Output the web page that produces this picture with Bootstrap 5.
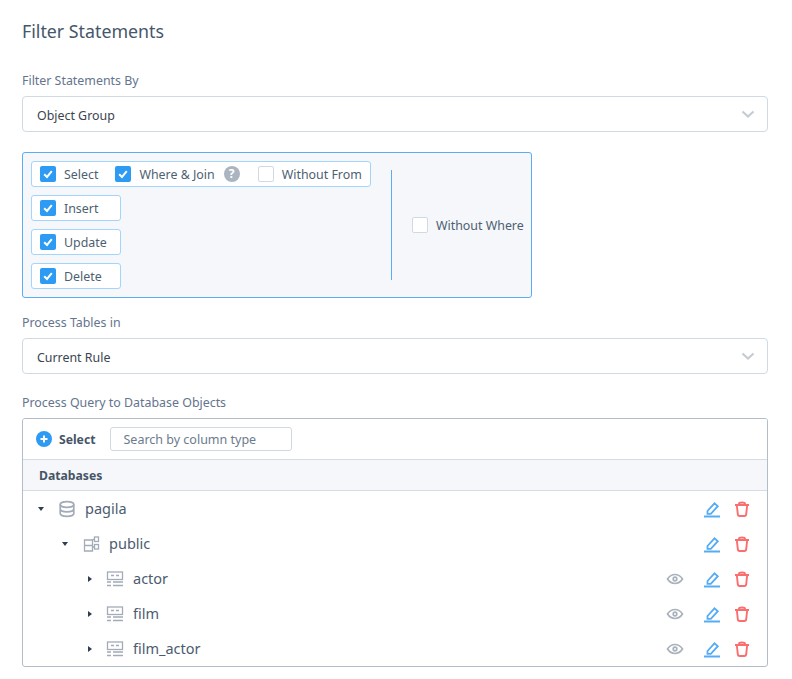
<!DOCTYPE html>
<html lang="en">
<head>
<meta charset="utf-8">
<title>Filter Statements</title>
<link href="https://cdn.jsdelivr.net/npm/bootstrap@5.3.0/dist/css/bootstrap.min.css" rel="stylesheet">
<style>
html,body{height:679px;overflow:hidden;background:#fff}
body{font-family:"Noto Sans","Liberation Sans",sans-serif;color:#465a70;font-size:12.4px;line-height:18px}
.pg{padding:0 24px 0 22px}
.ttl{font-size:17.8px;font-weight:400;line-height:26px;color:#45576b;margin:0;padding-top:18px;height:71px}
.lbl{font-size:12.4px;line-height:18px;height:17px;color:#64748e;margin:0;display:block}
.lbl.a{margin-bottom:8px;padding-top:1px}
.lbl.b{margin-bottom:7px}
.lbl.c{margin:20px 0 8px}
.sel{height:36px;border:1px solid #cfdae3;border-radius:4px;padding:0 12px 0 14px;color:#3b4450;font-size:12.4px;background:#fff}
.sel span{padding-top:3px}
.sel svg{width:14px;height:9px}
.opts{width:510px;height:146px;border:1px solid #5badf0;border-radius:3px;background:#f5f7fa;margin-top:20px;padding:8px;margin-bottom:16px}
.lft{width:340px;flex:none}
.chip{height:26px;background:#fff;border:1px solid #a3d5fc;border-radius:3px;padding:0 8px;gap:8px}
.chip.wd{width:90px}
.chk{width:16px;height:16px;border-radius:2px;background:#2d9bf3;flex:none}
.chk.off{background:#fff;border:1px solid #cfdae3}
.chk svg{display:block;width:16px;height:16px}
.txt{color:#4e5f73;font-size:12.4px;white-space:nowrap;padding-top:2px}
.g2{margin-left:9px}
.g3{margin-left:10px}
.qm{width:16px;height:16px;border-radius:50%;background:#abb5c1;color:#fff;font-size:12px;font-weight:700;line-height:16px;text-align:center;flex:none;margin-left:1px}
.dv{width:1px;height:110px;background:#5badf0;margin:0 20px;flex:none}
.pnl{height:249px;border:1px solid #b3bdc7;border-radius:3px;margin-top:-1px;overflow:hidden}
.tb{height:41px;border-bottom:1px solid #d5dce3;padding:0 13px;background:#fff}
.pl{width:16px;height:16px;display:block;flex:none}
.sb{font-weight:700;font-size:12.2px;color:#465566;margin:0 15px 0 7px;padding-top:2px}
.srch{width:182px;height:24px;border:1px solid #cfd9e2;border-radius:3px;padding:0 12px;color:#6b7b8e;font-size:12.5px;line-height:24px}
.hd{height:31px;background:#f5f7fa;border-bottom:1px solid #d5dce3;padding:2px 16px 0;font-weight:700;font-size:12.2px;color:#465566}
.rw{height:35px;padding-right:16px;font-size:14.5px;color:#4c5c6f}
.rw span{padding-bottom:2px}
.l0{padding-left:13px}.l1{padding-left:37px}.l2{padding-left:62px}
.ar{width:10px;height:10px;display:block;flex:none;margin-right:12px}
.l2 .ar{margin-right:11px}
.ic{width:18px;height:18px;display:block;flex:none;margin-right:9px}
.act{width:18px;height:18px;display:block;flex:none}
.eye{margin-right:19px}
.ed{margin-right:12px}
</style>
</head>
<body>
<div class="pg">
<h1 class="ttl">Filter Statements</h1>
<label class="lbl a">Filter Statements By</label>
<div class="sel d-flex align-items-center justify-content-between"><span>Object Group</span><svg viewBox="0 0 14 9"><path d="M1.5 1.5 7 6.500l5.500-5" fill="none" stroke="#c6ccd2" stroke-width="2.200"/></svg></div>

<div class="opts d-flex align-items-center">
  <div class="lft d-flex flex-column gap-2">
    <div class="chip d-flex align-items-center">
      <span class="chk"><svg viewBox="0 0 16 16"><path d="M4.200 8.300 7 11l4.800-5.800" fill="none" stroke="#fff" stroke-width="2"/></svg></span><span class="txt">Select</span>
      <span class="chk g2"><svg viewBox="0 0 16 16"><path d="M4.200 8.300 7 11l4.800-5.800" fill="none" stroke="#fff" stroke-width="2"/></svg></span><span class="txt">Where &amp; Join</span>
      <span class="qm">?</span>
      <span class="chk off g3"></span><span class="txt">Without From</span>
    </div>
    <div class="chip wd d-flex align-items-center"><span class="chk"><svg viewBox="0 0 16 16"><path d="M4.200 8.300 7 11l4.800-5.800" fill="none" stroke="#fff" stroke-width="2"/></svg></span><span class="txt">Insert</span></div>
    <div class="chip wd d-flex align-items-center"><span class="chk"><svg viewBox="0 0 16 16"><path d="M4.200 8.300 7 11l4.800-5.800" fill="none" stroke="#fff" stroke-width="2"/></svg></span><span class="txt">Update</span></div>
    <div class="chip wd d-flex align-items-center"><span class="chk"><svg viewBox="0 0 16 16"><path d="M4.200 8.300 7 11l4.800-5.800" fill="none" stroke="#fff" stroke-width="2"/></svg></span><span class="txt">Delete</span></div>
  </div>
  <div class="dv"></div>
  <div class="d-flex align-items-center gap-2"><span class="chk off"></span><span class="txt">Without Where</span></div>
</div>

<label class="lbl b">Process Tables in</label>
<div class="sel d-flex align-items-center justify-content-between"><span>Current Rule</span><svg viewBox="0 0 14 9"><path d="M1.5 1.5 7 6.500l5.500-5" fill="none" stroke="#c6ccd2" stroke-width="2.200"/></svg></div>

<label class="lbl c">Process Query to Database Objects</label>
<div class="pnl">
  <div class="tb d-flex align-items-center">
    <svg class="pl" viewBox="0 0 16 16"><circle cx="8" cy="8" r="8" fill="#2d9bf3"/><path d="M8 4.500v7M4.500 8h7" stroke="#fff" stroke-width="2"/></svg>
    <span class="sb">Select</span><div class="srch">Search by column type</div>
  </div>
  <div class="hd d-flex align-items-center">Databases</div>

  <div class="rw l0 d-flex align-items-center">
    <svg class="ar" viewBox="0 0 10 10"><path d="M2 3h6L5 7z" fill="#2f3f52"/></svg>
    <svg class="ic" viewBox="0 0 18 18" fill="none" stroke="#a3abb8" stroke-width="1.700"><ellipse cx="9" cy="4.500" rx="6.800" ry="2.800"/><path d="M2.200 4.500v9c0 1.500 3 2.800 6.800 2.800s6.800-1.300 6.800-2.800v-9M2.200 9c0 1.500 3 2.800 6.800 2.800s6.800-1.300 6.800-2.800"/></svg>
    <span>pagila</span>
    <svg class="act ed ms-auto" viewBox="0 0 18 18" fill="none" stroke="#55acf5" stroke-width="1.800"><path d="M4.500 11 11.500 3.300l3.300 2.900-7 7.600H4.500z"/><path d="M1 16.500h16" stroke-width="2"/></svg>
    <svg class="act" viewBox="0 0 18 18" fill="none" stroke="#fb6e6e" stroke-width="1.900"><path d="M2 5h14M6 5V3.800C6 2 12 2 12 3.800V5M3.800 5l1 9.200c.1 1.200.8 1.800 1.800 1.800h4.800c1 0 1.700-.6 1.800-1.800l1-9.200"/></svg>
  </div>

  <div class="rw l1 d-flex align-items-center">
    <svg class="ar" viewBox="0 0 10 10"><path d="M2 3h6L5 7z" fill="#2f3f52"/></svg>
    <svg class="ic" viewBox="0 0 18 18" fill="none" stroke="#a3abb8" stroke-width="1.300"><path d="M10.500 5H2.500v11h8zM2.500 10.500h8M10.500 4.500h2M10.500 12h2"/><rect x="12.500" y="2" width="4" height="4.500"/><rect x="12.500" y="9.500" width="4" height="4.500"/></svg>
    <span>public</span>
    <svg class="act ed ms-auto" viewBox="0 0 18 18" fill="none" stroke="#55acf5" stroke-width="1.800"><path d="M4.500 11 11.500 3.300l3.300 2.900-7 7.600H4.500z"/><path d="M1 16.500h16" stroke-width="2"/></svg>
    <svg class="act" viewBox="0 0 18 18" fill="none" stroke="#fb6e6e" stroke-width="1.900"><path d="M2 5h14M6 5V3.800C6 2 12 2 12 3.800V5M3.800 5l1 9.200c.1 1.200.8 1.800 1.800 1.800h4.800c1 0 1.700-.6 1.800-1.800l1-9.200"/></svg>
  </div>

  <div class="rw l2 d-flex align-items-center">
    <svg class="ar" viewBox="0 0 10 10"><path d="M3 2v6l4-3z" fill="#2f3f52"/></svg>
    <svg class="ic" viewBox="0 0 18 18" fill="none" stroke="#a3abb8" stroke-width="1.300"><rect x="1.500" y="2" width="15" height="7.500"/><path d="M5 5.500h3M10 5.500h3"/><path d="M1 12h4M7 12h10M1 15.500h4M7 15.500h10" stroke-width="1.500"/></svg>
    <span>actor</span>
    <svg class="act eye ms-auto" viewBox="0 0 18 18" fill="none" stroke="#a9b2bd" stroke-width="1.700"><path d="M1.500 9C3.500 6 6 4.500 9 4.500S14.500 6 16.500 9c-2 3-4.500 4.500-7.500 4.500S3.500 12 1.500 9z"/><circle cx="9" cy="9" r="1.800"/></svg>
    <svg class="act ed" viewBox="0 0 18 18" fill="none" stroke="#55acf5" stroke-width="1.800"><path d="M4.500 11 11.500 3.300l3.300 2.900-7 7.600H4.500z"/><path d="M1 16.500h16" stroke-width="2"/></svg>
    <svg class="act" viewBox="0 0 18 18" fill="none" stroke="#fb6e6e" stroke-width="1.900"><path d="M2 5h14M6 5V3.800C6 2 12 2 12 3.800V5M3.800 5l1 9.200c.1 1.200.8 1.800 1.800 1.800h4.800c1 0 1.700-.6 1.800-1.800l1-9.200"/></svg>
  </div>

  <div class="rw l2 d-flex align-items-center">
    <svg class="ar" viewBox="0 0 10 10"><path d="M3 2v6l4-3z" fill="#2f3f52"/></svg>
    <svg class="ic" viewBox="0 0 18 18" fill="none" stroke="#a3abb8" stroke-width="1.300"><rect x="1.500" y="2" width="15" height="7.500"/><path d="M5 5.500h3M10 5.500h3"/><path d="M1 12h4M7 12h10M1 15.500h4M7 15.500h10" stroke-width="1.500"/></svg>
    <span>film</span>
    <svg class="act eye ms-auto" viewBox="0 0 18 18" fill="none" stroke="#a9b2bd" stroke-width="1.700"><path d="M1.500 9C3.500 6 6 4.500 9 4.500S14.500 6 16.500 9c-2 3-4.500 4.500-7.500 4.500S3.500 12 1.500 9z"/><circle cx="9" cy="9" r="1.800"/></svg>
    <svg class="act ed" viewBox="0 0 18 18" fill="none" stroke="#55acf5" stroke-width="1.800"><path d="M4.500 11 11.500 3.300l3.300 2.900-7 7.600H4.500z"/><path d="M1 16.500h16" stroke-width="2"/></svg>
    <svg class="act" viewBox="0 0 18 18" fill="none" stroke="#fb6e6e" stroke-width="1.900"><path d="M2 5h14M6 5V3.800C6 2 12 2 12 3.800V5M3.800 5l1 9.200c.1 1.200.8 1.800 1.800 1.800h4.800c1 0 1.700-.6 1.800-1.800l1-9.200"/></svg>
  </div>

  <div class="rw l2 d-flex align-items-center">
    <svg class="ar" viewBox="0 0 10 10"><path d="M3 2v6l4-3z" fill="#2f3f52"/></svg>
    <svg class="ic" viewBox="0 0 18 18" fill="none" stroke="#a3abb8" stroke-width="1.300"><rect x="1.500" y="2" width="15" height="7.500"/><path d="M5 5.500h3M10 5.500h3"/><path d="M1 12h4M7 12h10M1 15.500h4M7 15.500h10" stroke-width="1.500"/></svg>
    <span>film_actor</span>
    <svg class="act eye ms-auto" viewBox="0 0 18 18" fill="none" stroke="#a9b2bd" stroke-width="1.700"><path d="M1.500 9C3.500 6 6 4.500 9 4.500S14.500 6 16.500 9c-2 3-4.500 4.500-7.500 4.500S3.500 12 1.500 9z"/><circle cx="9" cy="9" r="1.800"/></svg>
    <svg class="act ed" viewBox="0 0 18 18" fill="none" stroke="#55acf5" stroke-width="1.800"><path d="M4.500 11 11.500 3.300l3.300 2.900-7 7.600H4.500z"/><path d="M1 16.500h16" stroke-width="2"/></svg>
    <svg class="act" viewBox="0 0 18 18" fill="none" stroke="#fb6e6e" stroke-width="1.900"><path d="M2 5h14M6 5V3.800C6 2 12 2 12 3.800V5M3.800 5l1 9.200c.1 1.200.8 1.800 1.800 1.800h4.800c1 0 1.700-.6 1.800-1.800l1-9.200"/></svg>
  </div>
</div>
</div>
<script src="https://cdn.jsdelivr.net/npm/bootstrap@5.3.0/dist/js/bootstrap.bundle.min.js"></script>
</body>
</html>
